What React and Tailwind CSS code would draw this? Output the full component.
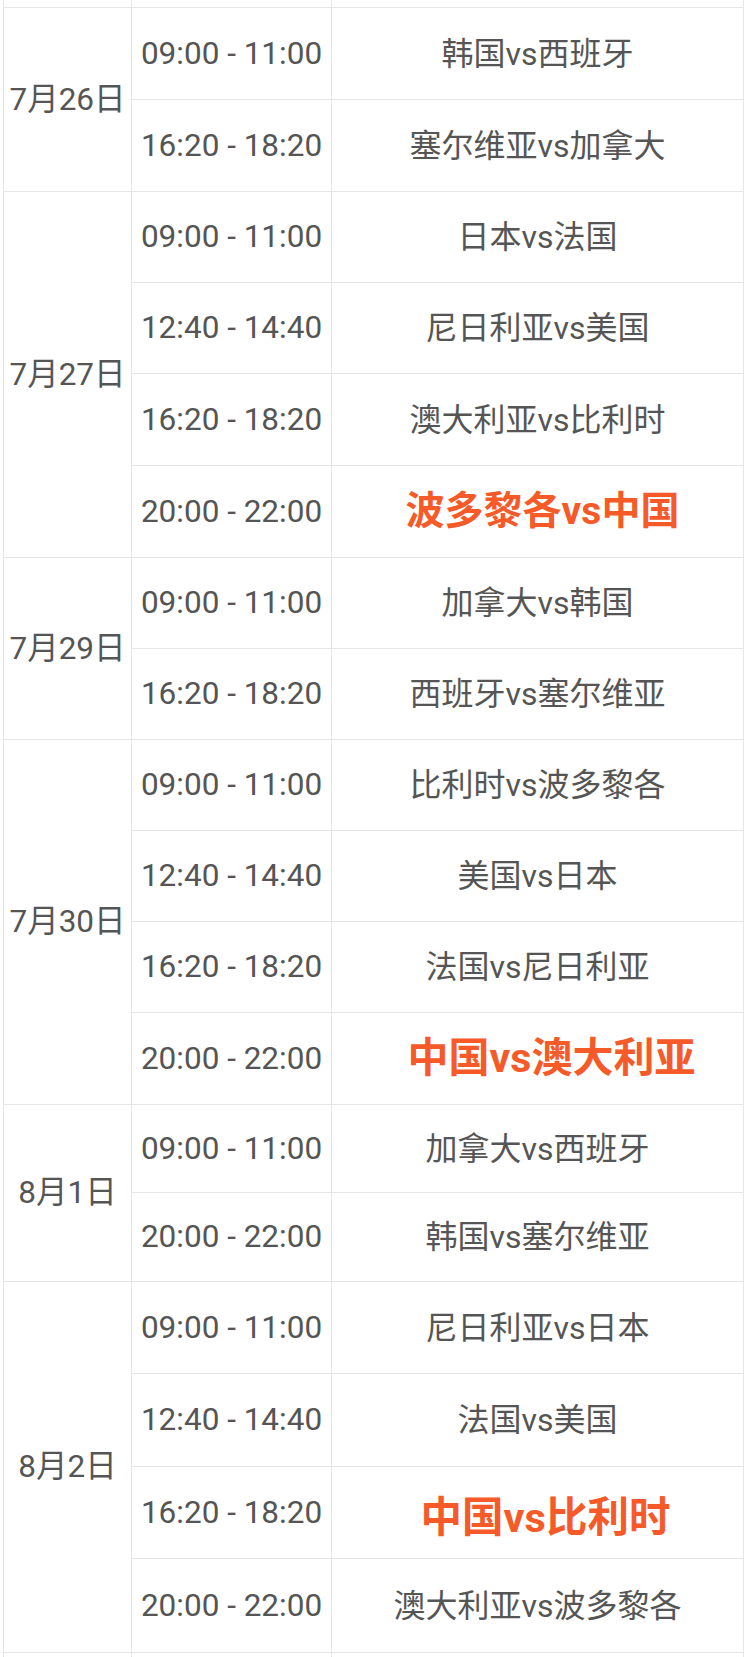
import React from 'react';

const groups = [
  {
    date: '7月26日',
    rows: [
      { time: '09:00 - 11:00', match: '韩国vs西班牙', h: 'h-[92px]' },
      { time: '16:20 - 18:20', match: '塞尔维亚vs加拿大', h: 'h-[91px]' },
    ],
  },
  {
    date: '7月27日',
    rows: [
      { time: '09:00 - 11:00', match: '日本vs法国', h: 'h-[91px]' },
      { time: '12:40 - 14:40', match: '尼日利亚vs美国', h: 'h-[91px]' },
      { time: '16:20 - 18:20', match: '澳大利亚vs比利时', h: 'h-[92px]' },
      { time: '20:00 - 22:00', match: '波多黎各vs中国', h: 'h-[91px]', hot: 'text-[39px] pl-[10px]' },
    ],
  },
  {
    date: '7月29日',
    rows: [
      { time: '09:00 - 11:00', match: '加拿大vs韩国', h: 'h-[91px]' },
      { time: '16:20 - 18:20', match: '西班牙vs塞尔维亚', h: 'h-[90px]' },
    ],
  },
  {
    date: '7月30日',
    rows: [
      { time: '09:00 - 11:00', match: '比利时vs波多黎各', h: 'h-[91px]' },
      { time: '12:40 - 14:40', match: '美国vs日本', h: 'h-[91px]' },
      { time: '16:20 - 18:20', match: '法国vs尼日利亚', h: 'h-[91px]' },
      { time: '20:00 - 22:00', match: '中国vs澳大利亚', h: 'h-[91px]', hot: 'text-[41px] pl-[28px]' },
    ],
  },
  {
    date: '8月1日',
    rows: [
      { time: '09:00 - 11:00', match: '加拿大vs西班牙', h: 'h-[88px]' },
      { time: '20:00 - 22:00', match: '韩国vs塞尔维亚', h: 'h-[88px]' },
    ],
  },
  {
    date: '8月2日',
    rows: [
      { time: '09:00 - 11:00', match: '尼日利亚vs日本', h: 'h-[92px]' },
      { time: '12:40 - 14:40', match: '法国vs美国', h: 'h-[93px]' },
      { time: '16:20 - 18:20', match: '中国vs比利时', h: 'h-[92px]', hot: 'text-[41.5px] pl-[16px] pt-[10px]' },
      { time: '20:00 - 22:00', match: '澳大利亚vs波多黎各', h: 'h-[93px]' },
    ],
  },
];

const Row = ({ row, last }) => (
  <div className={`flex ${row.h} ${last ? '' : 'border-b border-[#e6e6e6]'}`}>
    <div className="w-[200px] border-r border-[#e6e6e6] flex items-center justify-center">
      {row.time}
    </div>
    <div className="flex-1 flex items-center justify-center text-[32px]">
      {row.hot ? (
        <span className={`font-bold text-[#f55a28] ${row.hot}`}>{row.match}</span>
      ) : (
        row.match
      )}
    </div>
  </div>
);

export default function App() {
  return (
    <div
      className="min-h-screen bg-white text-[31.5px] text-[#555555] leading-none"
      style={{ fontFamily: 'Roboto, "Noto Sans CJK SC", sans-serif' }}
    >
      <div className="ml-[3px] w-[741px] h-[1657px] overflow-hidden border-x border-[#e6e6e6]">
        {/* tail of the previous row */}
        <div className="flex h-[8px] border-b border-[#e6e6e6]">
          <div className="w-[128px] border-r border-[#e6e6e6]" />
          <div className="w-[200px] border-r border-[#e6e6e6]" />
        </div>

        {groups.map((g) => (
          <div key={g.date} className="flex border-b border-[#e6e6e6]">
            <div className="w-[128px] border-r border-[#e6e6e6] flex items-center justify-center">
              {g.date}
            </div>
            <div className="flex-1 flex flex-col">
              {g.rows.map((r, i) => (
                <Row key={r.time + r.match} row={r} last={i === g.rows.length - 1} />
              ))}
            </div>
          </div>
        ))}

        <div className="flex h-[40px]">
          <div className="w-[128px] border-r border-[#e6e6e6]" />
          <div className="w-[200px] border-r border-[#e6e6e6]" />
        </div>
      </div>
    </div>
  );
}
